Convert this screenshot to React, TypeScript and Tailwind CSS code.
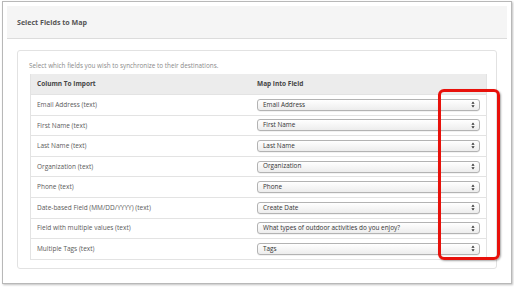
const rows = [
  { col: "Email Address (text)", field: "Email Address" },
  { col: "First Name (text)", field: "First Name" },
  { col: "Last Name (text)", field: "Last Name" },
  { col: "Organization (text)", field: "Organization" },
  { col: "Phone (text)", field: "Phone" },
  { col: "Date-based Field (MM/DD/YYYY) (text)", field: "Create Date" },
  { col: "Field with multiple values (text)", field: "What types of outdoor activities do you enjoy?" },
  { col: "Multiple Tags (text)", field: "Tags" },
];

const FakeSelect = ({ value }: { value: string }) => (
  <div className="flex items-center h-[12px] w-full rounded-[3px] border border-[#b3b3b3] bg-gradient-to-b from-white to-[#ededed] pl-[5px] pr-[4px] shadow-[0_0.5px_0.5px_rgba(0,0,0,0.1)]">
    <span className="flex-1 text-[6.4px] leading-none text-[#333]">{value}</span>
    <svg width="4" height="7" viewBox="0 0 4 7" className="text-[#333]">
      <path d="M2 0.5 L3.6 2.8 H0.4 Z" fill="currentColor" />
      <path d="M2 6.5 L3.6 4.2 H0.4 Z" fill="currentColor" />
    </svg>
  </div>
);

export default function App() {
  return (
    <div className="relative w-[514px] h-[287px] overflow-hidden bg-white font-['Open_Sans',sans-serif]">
      <div className="ml-[2px] mt-[1px] w-[510px] h-[283px] border border-[#b8b8b8] bg-white p-[4px] shadow-[1px_1px_2px_rgba(0,0,0,0.25)]">
        <div className="flex items-center h-[33px] bg-[#f5f5f5] border-b border-[#dcdcdc] pl-[10px]">
          <span className="text-[7.1px] font-bold text-[#555]">Select Fields to Map</span>
        </div>

        <div className="ml-[10px] mt-[11px] w-[480px] h-[219px] rounded-[3px] border border-[#e2e2e2] bg-white px-[11px] pt-[10px]">
          <div className="h-[10px] text-[6.35px] leading-[10px] text-[#8a8a8a]">
            Select which fields you wish to synchronize to their destinations.
          </div>

          <div className="mt-[3px] ml-[1px] w-[457px] border-x border-b border-[#e3e3e3]">
            <div className="flex items-center h-[20px] bg-[#ececec] text-[6.5px] font-bold text-[#444]">
              <div className="w-[220px] pl-[6px]">Column To Import</div>
              <div className="flex-1 pl-[6px]">Map Into Field</div>
            </div>
            {rows.map((r) => (
              <div
                key={r.col}
                className="flex items-center h-[20.6px] border-t border-[#e3e3e3] text-[6.5px] text-[#5a5a5a]"
              >
                <div className="w-[220px] pl-[6px]">{r.col}</div>
                <div className="flex-1 px-[6px]">
                  <FakeSelect value={r.field} />
                </div>
              </div>
            ))}
          </div>
        </div>
      </div>

      <div className="absolute left-[438px] top-[89px] w-[62px] h-[171px] rounded-[6px] border-[3px] border-[#e8110b] shadow-[1px_1px_2px_rgba(0,0,0,0.35)]" />
    </div>
  );
}
